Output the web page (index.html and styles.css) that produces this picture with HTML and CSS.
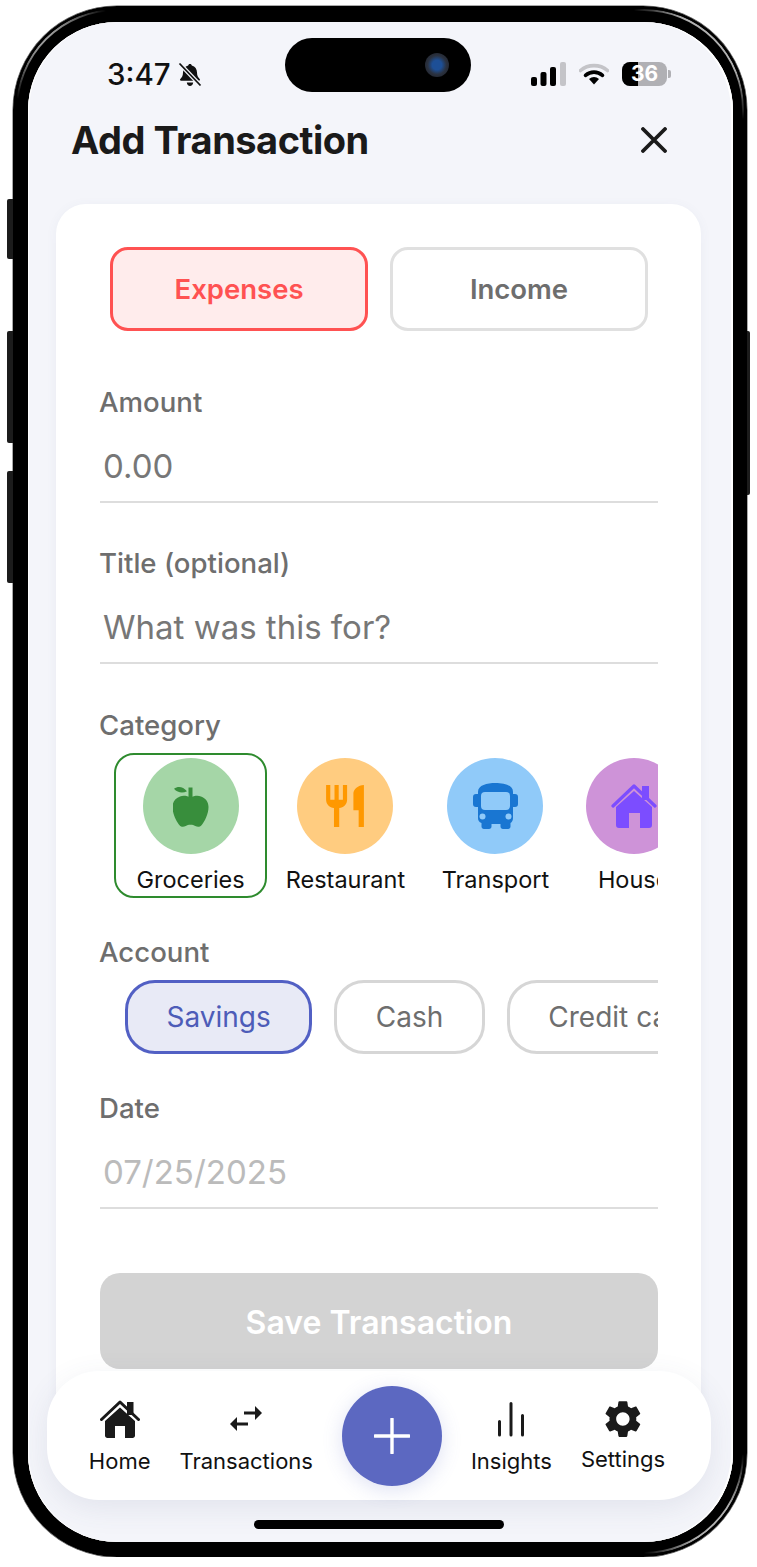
FILE: index.html
```html
<!DOCTYPE html>
<html lang="en">
<head>
    <meta charset="UTF-8">
    <meta name="viewport" content="width=device-width, initial-scale=1.0">
    <title>Add Transaction</title>
    <link rel="stylesheet" href="styles.css">
</head>
<body>

    <div class="phone">
        <span class="side-btn side-mute"></span>
        <span class="side-btn side-up"></span>
        <span class="side-btn side-down"></span>
        <span class="side-btn side-power"></span>
        <span class="sheen"></span>

        <div class="screen">
            <div class="island"><span class="camera"></span></div>

            <div class="status-bar">
                <div class="status-left">
                    <span class="time">3:47</span>
                    <svg class="bell" viewBox="0 0 24 25">
                        <path d="M12 2c1 0 1.700.6 1.800 1.500 3.400.9 5.200 3.700 5.200 7 0 3.300 1.200 5 2.700 6.600.6.7.2 1.600-.7 1.600H3c-.9 0-1.300-.9-.7-1.600C3.800 15.500 5 13.800 5 10.500c0-3.300 1.800-6.100 5.200-7 .1-.9.800-1.500 1.800-1.500zM8.800 20.500h6.400c-.2 2-1.500 3.500-3.200 3.500s-3-1.500-3.200-3.500z" fill="#111"/>
                        <path d="M1.500 1.500l21 22" stroke="#f4f5fa" stroke-width="4"/>
                        <path d="M1.500 1.500l21 22" stroke="#111" stroke-width="1.800"/>
                    </svg>
                </div>
                <div class="status-right">
                    <svg class="signal" viewBox="0 0 35 24">
                        <rect x="0" y="15" width="6" height="9" rx="2" fill="#000"/>
                        <rect x="9.500" y="10" width="6" height="14" rx="2" fill="#000"/>
                        <rect x="19" y="5" width="6" height="19" rx="2" fill="#000"/>
                        <rect x="29" y="0" width="6" height="24" rx="2" fill="#c4c4c8"/>
                    </svg>
                    <svg class="wifi" viewBox="0 0 30 22">
                        <path d="M1.500 7.500C9 1 21 1 28.500 7.500" fill="none" stroke="#c4c4c8" stroke-width="3.600" stroke-linecap="round"/>
                        <path d="M6.500 12.300c5-4.300 12-4.300 17 0" fill="none" stroke="#000" stroke-width="3.600" stroke-linecap="round"/>
                        <path d="M10 16c3-2.700 7-2.700 10 0l-5 5.500z" fill="#000"/>
                    </svg>
                    <div class="battery">
                        <div class="battery-body"><span class="battery-fill"></span><span class="battery-num">36</span></div>
                        <span class="battery-tip"></span>
                    </div>
                </div>
            </div>

            <div class="header">
                <h1>Add Transaction</h1>
                <svg class="close" viewBox="0 0 26 26">
                    <path d="M2 2l22 22M24 2L2 24" stroke="#1a1a1a" stroke-width="3.800" stroke-linecap="round"/>
                </svg>
            </div>

            <div class="card">
                <div class="type-toggle">
                    <div class="type-btn type-active">Expenses</div>
                    <div class="type-btn">Income</div>
                </div>

                <div class="field field-first">
                    <div class="label">Amount</div>
                    <div class="value">0.00</div>
                </div>

                <div class="field">
                    <div class="label">Title (optional)</div>
                    <div class="value">What was this for?</div>
                </div>

                <div class="label label-category">Category</div>
                <div class="categories">
                    <div class="category category-active">
                        <span class="cat-icon cat-green">
                            <svg viewBox="0 0 36 42">
                                <path d="M1 3.800C5 .6 10 1.400 14 6.300 9.800 8.400 4.500 8 1 3.800z" fill="#388e3c"/>
                                <rect x="15.500" y="2.500" width="4" height="11" fill="#388e3c"/>
                                <path d="M17.500 12.500c3.500-1.600 7-2.200 10.500-1 4.800 1.600 7.500 5.600 7.500 10.500 0 7-3.800 14.500-7 18.200-1.800 2-4 2-6.200.8-1.600-.9-2.600-1.300-4.800-1.300s-3.200.4-4.800 1.300c-2.200 1.200-4.400 1.200-6.200-.8C3.300 36.500-.500 29-.500 22c0-4.900 2.700-8.900 7.500-10.500 3.500-1.200 7-.6 10.500 1z" fill="#388e3c"/>
                            </svg>
                        </span>
                        <span class="cat-name">Groceries</span>
                    </div>
                    <div class="category">
                        <span class="cat-icon cat-orange">
                            <svg viewBox="3 2 18 20">
                                <path d="M11 9H9V2H7v7H5V2H3v7c0 2.120 1.660 3.840 3.750 3.970V22h2.500v-9.030C11.340 12.840 13 11.120 13 9V2h-2v7zm5-3v8h2.500v8H21V2c-2.760 0-5 2.240-5 4z" fill="#ff9800"/>
                            </svg>
                        </span>
                        <span class="cat-name">Restaurant</span>
                    </div>
                    <div class="category">
                        <span class="cat-icon cat-blue">
                            <svg viewBox="0 0 47 46">
                                <path d="M6 9C6 2 15 0 23.500 0S41 2 41 9v2h2c2 0 3 1 3 3v7c0 2-1 3-3 3h-2v11c0 2.500-1 4-2.500 5v3.500c0 1.500-1 2.500-2.500 2.500h-5c-1.500 0-2.500-1-2.500-2.500V41H19.500v2.500c0 1.500-1 2.500-2.500 2.500h-5c-1.500 0-2.500-1-2.500-2.500V40C7 39 6 37.500 6 35V24H4c-2 0-3-1-3-3v-7c0-2 1-3 3-3h2V9z" fill="#1976d2"/>
                                <rect x="9" y="9" width="29" height="18" rx="4" fill="#90caf9"/>
                                <circle cx="10.500" cy="33.500" r="3" fill="#90caf9"/>
                                <circle cx="36.500" cy="33.500" r="3" fill="#90caf9"/>
                            </svg>
                        </span>
                        <span class="cat-name">Transport</span>
                    </div>
                    <div class="category">
                        <span class="cat-icon cat-purple">
                            <svg viewBox="0 0 46 46">
                                <rect x="31" y="3" width="7" height="14" fill="#7c4dff"/>
                                <path d="M2 23L23 3l21 20" fill="none" stroke="#7c4dff" stroke-width="3.200" stroke-linecap="round" stroke-linejoin="round"/>
                                <path d="M5 24L23 8l18 16v18c0 2-1 3-3 3H29V30H18v15H8c-2 0-3-1-3-3z" fill="#7c4dff"/>
                            </svg>
                        </span>
                        <span class="cat-name">House</span>
                    </div>
                </div>

                <div class="label label-account">Account</div>
                <div class="accounts">
                    <div class="account account-active">Savings</div>
                    <div class="account">Cash</div>
                    <div class="account">Credit card</div>
                </div>

                <div class="field field-date">
                    <div class="label">Date</div>
                    <div class="value value-date">07/25/2025</div>
                </div>

                <div class="save-btn">Save Transaction</div>
            </div>

            <div class="bottom-nav">
                <div class="nav-item">
                    <svg class="nav-icon" viewBox="0 0 40 38">
                        <rect x="27" y="2" width="6.500" height="13" fill="#1a1a1a"/>
                        <path d="M1.500 19.500L20 2l18.500 17.500" fill="none" stroke="#1a1a1a" stroke-width="3" stroke-linecap="round" stroke-linejoin="round"/>
                        <path d="M5 21L20 7.500 35 21v14.500c0 1.500-1 2.500-2.500 2.500H25V26h-10v12H7.500C6 38 5 37 5 35.500z" fill="#1a1a1a"/>
                    </svg>
                    <span class="nav-label">Home</span>
                </div>
                <div class="nav-item">
                    <svg class="nav-icon" viewBox="0 0 32 38">
                        <path d="M14 13h13M18 24H6" fill="none" stroke="#1a1a1a" stroke-width="3"/>
                        <path d="M25 6l7 7-7 7z" fill="#1a1a1a"/>
                        <path d="M7 17l-7 7 7 7z" fill="#1a1a1a"/>
                    </svg>
                    <span class="nav-label">Transactions</span>
                </div>
                <div class="nav-add">
                    <svg viewBox="0 0 36 36">
                        <path d="M18 1v34M1 18h34" stroke="#fff" stroke-width="3.400" stroke-linecap="round"/>
                    </svg>
                </div>
                <div class="nav-item">
                    <svg class="nav-icon" viewBox="0 0 28 38">
                        <path d="M2.500 21.500V35M14 3.500V35M25.500 15.500V35" fill="none" stroke="#1a1a1a" stroke-width="3" stroke-linecap="round"/>
                    </svg>
                    <span class="nav-label">Insights</span>
                </div>
                <div class="nav-item nav-item-settings">
                    <svg class="nav-icon" viewBox="2.400 1.800 19.200 20.400">
                        <path d="M19.140 12.940c.04-.3.06-.61.06-.94 0-.32-.02-.64-.07-.94l2.030-1.580c.18-.14.23-.41.12-.61l-1.920-3.320c-.12-.22-.37-.29-.59-.22l-2.390.96c-.5-.38-1.030-.7-1.620-.94l-.36-2.540c-.04-.24-.24-.41-.48-.41h-3.840c-.24 0-.43.17-.47.41l-.36 2.540c-.59.24-1.130.57-1.620.94l-2.390-.96c-.22-.08-.47 0-.59.22L2.740 8.870c-.12.21-.08.47.12.61l2.030 1.580c-.05.3-.09.63-.09.94s.02.64.07.94l-2.030 1.580c-.18.14-.23.41-.12.61l1.920 3.320c.12.22.37.29.59.22l2.390-.96c.5.38 1.030.7 1.620.94l.36 2.540c.05.24.24.41.48.41h3.840c.24 0 .44-.17.47-.41l.36-2.540c.59-.24 1.130-.56 1.620-.94l2.390.96c.22.08.47 0 .59-.22l1.920-3.320c.12-.22.07-.47-.12-.61l-2.010-1.580zM12 15.600c-1.980 0-3.600-1.620-3.600-3.600s1.620-3.600 3.600-3.600 3.600 1.620 3.600 3.600-1.620 3.600-3.600 3.600z" fill="#1a1a1a"/>
                    </svg>
                    <span class="nav-label">Settings</span>
                </div>
            </div>

            <div class="home-bar"></div>
        </div>
    </div>

</body>
</html>
```

FILE: styles.css
```css
* {
    box-sizing: border-box;
}
body {
    margin: 0;
    background: #fff;
    font-family: Inter, "Liberation Sans", sans-serif;
    color: #111;
}

/* device frame */
.phone {
    position: relative;
    width: 734px;
    height: 1551px;
    margin: 6px 0 0 13px;
    border-style: solid;
    border-color: #000;
    border-width: 16px 14px 15px 15px;
    border-radius: 104px;
    box-shadow: 0 0 0 0.5px #555;
}
.sheen {
    position: absolute;
    top: -13px;
    right: -11px;
    bottom: -12px;
    left: -12px;
    border: 2px solid #b0b0b0;
    border-radius: 100px;
    -webkit-mask-image: radial-gradient(circle 110px at 100% 0, #000 55%, transparent 100%), radial-gradient(circle 100px at 100% 100%, #000 50%, transparent 100%), radial-gradient(circle 90px at 0 0, #000 40%, transparent 100%);
    mask-image: radial-gradient(circle 110px at 100% 0, #000 55%, transparent 100%), radial-gradient(circle 100px at 100% 100%, #000 50%, transparent 100%), radial-gradient(circle 90px at 0 0, #000 40%, transparent 100%);
}
.side-btn {
    position: absolute;
    width: 6px;
    background: #1c1c1c;
    border-radius: 2px 0 0 2px;
}
.side-mute {
    left: -21px;
    top: 177px;
    height: 60px;
}
.side-up {
    left: -21px;
    top: 309px;
    height: 112px;
}
.side-down {
    left: -21px;
    top: 449px;
    height: 112px;
}
.side-power {
    right: -17px;
    top: 309px;
    width: 3px;
    height: 164px;
    border-radius: 0 2px 2px 0;
}
.screen {
    position: relative;
    height: 100%;
    background: #f4f5fa;
    border-radius: 89px;
    box-shadow: inset -2px 0 0 #fff, inset 1px 0 0 #fff;
    overflow: hidden;
}

/* status bar */
.island {
    position: absolute;
    left: 257px;
    top: 16px;
    width: 186px;
    height: 54px;
    background: #000;
    border-radius: 27px;
}
.camera {
    position: absolute;
    left: 140px;
    top: 15px;
    width: 24px;
    height: 24px;
    border-radius: 50%;
    background: radial-gradient(circle, #1d4f96 0 28%, #2b3240 55%, #1a1c22 100%);
}
.status-bar {
    display: flex;
    justify-content: space-between;
    align-items: center;
    height: 52px;
    margin-top: 26px;
    padding: 0 62px 0 79px;
}
.status-left {
    display: flex;
    align-items: center;
    gap: 7px;
}
.time {
    font-size: 29.500px;
    font-weight: 500;
    line-height: 52px;
}
.bell {
    width: 24px;
    height: 25px;
}
.status-right {
    display: flex;
    align-items: center;
    gap: 13px;
}
.signal {
    width: 35px;
    height: 24px;
}
.wifi {
    width: 30px;
    height: 22px;
}
.battery {
    display: flex;
    align-items: center;
}
.battery-body {
    position: relative;
    width: 45px;
    height: 24px;
    border-radius: 8px;
    background: #b0b0b4;
    overflow: hidden;
    text-align: center;
}
.battery-fill {
    position: absolute;
    left: 0;
    top: 0;
    width: 16px;
    height: 24px;
    background: #000;
}
.battery-num {
    position: relative;
    font-size: 21px;
    font-weight: 700;
    line-height: 24px;
    color: #fff;
}
.battery-tip {
    width: 3px;
    height: 8px;
    margin-left: 1px;
    background: #b0b0b4;
    border-radius: 0 2px 2px 0;
}

/* header */
.header {
    display: flex;
    justify-content: space-between;
    align-items: center;
    height: 60px;
    margin-top: 10px;
    padding: 0 66px 0 43px;
}
h1 {
    margin: 0;
    font-size: 38px;
    font-weight: 700;
    letter-spacing: -0.5px;
    color: #1a1a1a;
}
.close {
    width: 26px;
    height: 26px;
}

/* card */
.card {
    margin: 34px 32px 0 28px;
    padding: 43px 43px 60px 44px;
    background: #fff;
    border-radius: 30px;
    box-shadow: 0 2px 12px rgba(90, 100, 140, 0.06);
}
.type-toggle {
    display: flex;
    gap: 22px;
    padding: 0 10px;
}
.type-btn {
    flex: 1;
    height: 84px;
    border: 3px solid #e0e0e0;
    border-radius: 18px;
    font-size: 27.500px;
    font-weight: 600;
    line-height: 78px;
    text-align: center;
    color: #6e6e6e;
}
.type-active {
    background: #ffecec;
    border-color: #ff5252;
    color: #ff5252;
}
.field {
    margin-top: 43px;
}
.field-first {
    margin-top: 54px;
}
.label {
    height: 34px;
    margin-left: -1px;
    font-size: 27.600px;
    font-weight: 500;
    line-height: 34px;
    color: #6e6e6e;
}
.value {
    height: 84px;
    padding: 27px 0 0 3px;
    border-bottom: 2px solid #ddd;
    font-size: 33px;
    line-height: 40px;
    color: #777;
}
.value-date {
    color: #bbb;
}
.label-category {
    margin-top: 44px;
}
.categories {
    display: flex;
    gap: 0.500px;
    margin-top: 11px;
    padding-left: 14px;
    overflow: hidden;
}
.category {
    display: flex;
    flex: none;
    flex-direction: column;
    align-items: center;
    height: 145px;
    padding: 3px 16px 0;
    border: 2px solid transparent;
    border-radius: 20px;
}
.category-active {
    padding: 3px 20.500px 0;
    border-color: #2e8b2e;
}
.cat-icon {
    display: flex;
    flex: none;
    justify-content: center;
    align-items: center;
    width: 96px;
    height: 96px;
    border-radius: 50%;
}
.cat-green {
    background: #a5d6a7;
}
.cat-green svg {
    width: 36px;
    height: 42px;
}
.cat-orange {
    background: #ffcc80;
}
.cat-orange svg {
    width: 38px;
    height: 42px;
}
.cat-blue {
    background: #90caf9;
}
.cat-blue svg {
    width: 47px;
    height: 46px;
}
.cat-purple {
    background: #ce93d8;
}
.cat-purple svg {
    width: 46px;
    height: 46px;
}
.cat-name {
    margin-top: 11px;
    font-size: 23.500px;
    line-height: 30px;
    white-space: nowrap;
}
.label-account {
    margin-top: 37px;
}
.accounts {
    display: flex;
    gap: 22px;
    margin-top: 11px;
    padding-left: 25px;
    overflow: hidden;
}
.account {
    flex: none;
    height: 74px;
    padding: 0 38.500px;
    border: 3px solid #d6d6d6;
    border-radius: 30px;
    font-size: 28px;
    line-height: 68px;
    color: #6e6e6e;
    white-space: nowrap;
}
.account-active {
    background: #e8eaf6;
    border-color: #5260c4;
    color: #4d5cb8;
}
.field-date {
    margin-top: 37px;
}
.save-btn {
    height: 96px;
    margin-top: 64px;
    border-radius: 20px;
    background: #d3d3d3;
    font-size: 32px;
    font-weight: 600;
    line-height: 100px;
    text-align: center;
    color: #fff;
}

/* bottom nav */
.bottom-nav {
    position: absolute;
    left: 19px;
    right: 22px;
    top: 1349px;
    display: flex;
    justify-content: center;
    align-items: center;
    gap: 29px;
    height: 129px;
    padding-right: 4px;
    background: #fff;
    border-radius: 52px;
    box-shadow: 0 8px 30px rgba(70, 80, 120, 0.1);
}
.nav-item {
    display: flex;
    flex-direction: column;
    align-items: center;
    padding-top: 4px;
}
.nav-icon {
    height: 38px;
}
.nav-label {
    margin-top: 9px;
    font-size: 22px;
    line-height: 28px;
    white-space: nowrap;
}
.nav-item-settings .nav-label {
    margin-top: 7px;
}
.nav-item-settings {
    padding-bottom: 2px;
}
.nav-add {
    display: flex;
    flex: none;
    justify-content: center;
    align-items: center;
    width: 100px;
    height: 100px;
    border-radius: 50%;
    background: #5c68c1;
    box-shadow: 0 4px 20px rgba(92, 104, 193, 0.2);
}
.nav-add svg {
    width: 36px;
    height: 36px;
}
.home-bar {
    position: absolute;
    left: 226px;
    top: 1498px;
    width: 250px;
    height: 9px;
    background: #000;
    border-radius: 5px;
}
```
